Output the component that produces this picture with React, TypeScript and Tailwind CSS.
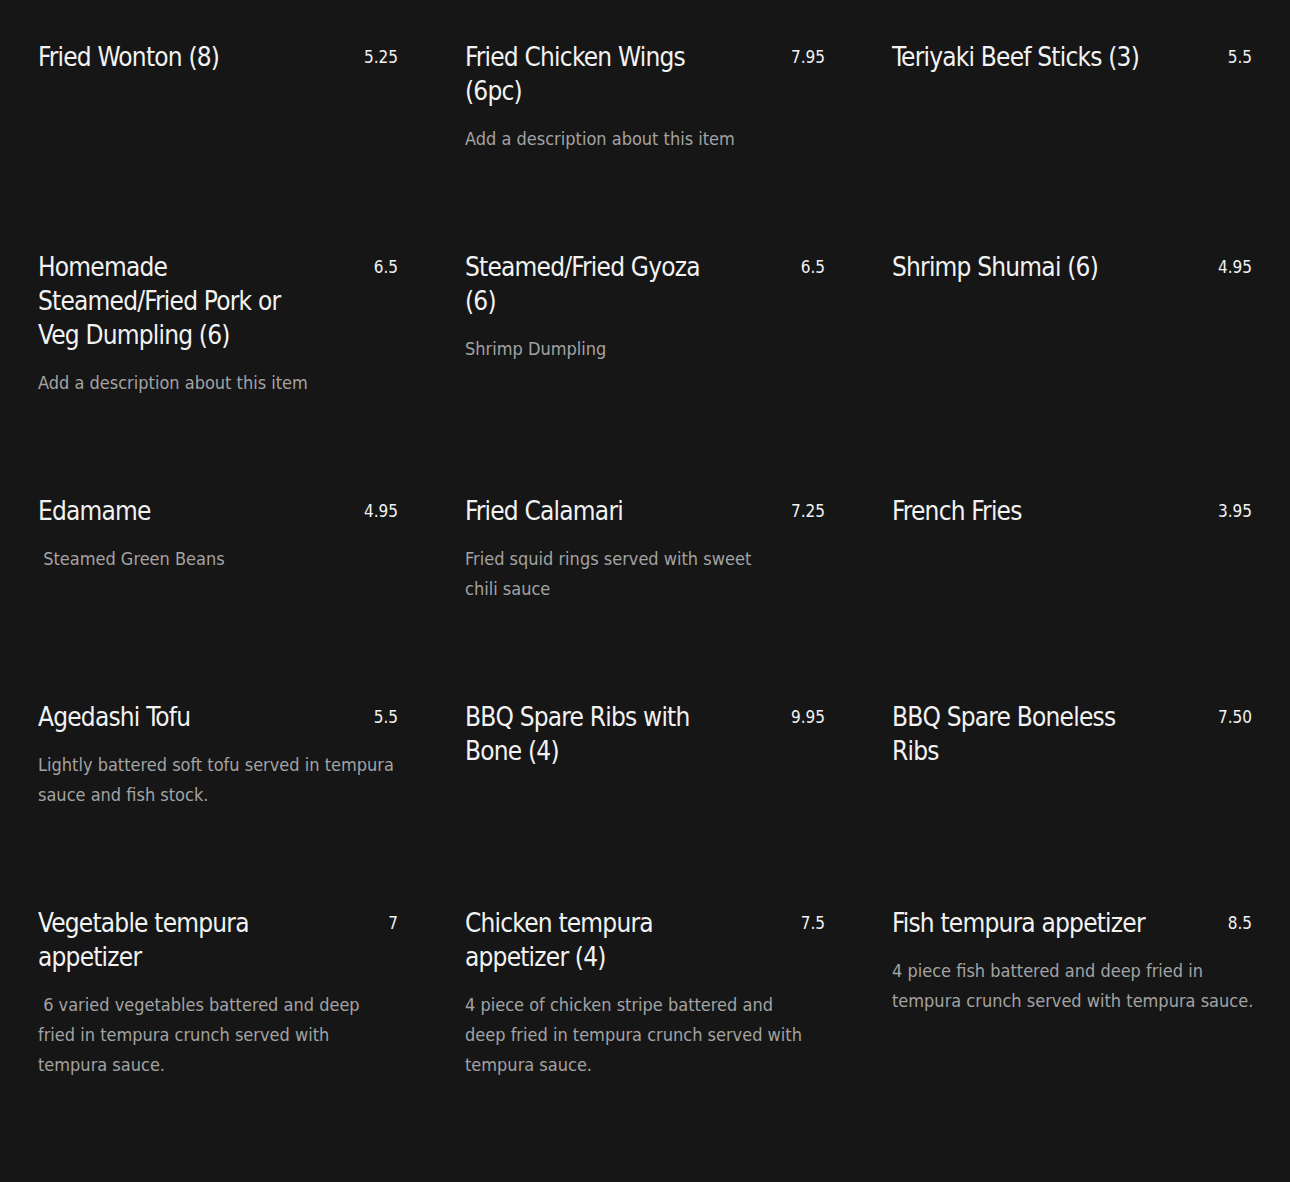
const items = [
  { name: 'Fried Wonton (8)', price: '5.25', desc: '' },
  { name: 'Fried Chicken Wings (6pc)', price: '7.95', desc: 'Add a description about this item' },
  { name: 'Teriyaki Beef Sticks (3)', price: '5.5', desc: '' },
  { name: 'Homemade Steamed/Fried Pork or Veg Dumpling (6)', price: '6.5', desc: 'Add a description about this item' },
  { name: 'Steamed/Fried Gyoza (6)', price: '6.5', desc: 'Shrimp Dumpling' },
  { name: 'Shrimp Shumai (6)', price: '4.95', desc: '' },
  { name: 'Edamame', price: '4.95', desc: ' Steamed Green Beans' },
  { name: 'Fried Calamari', price: '7.25', desc: 'Fried squid rings served with sweet\nchili sauce' },
  { name: 'French Fries', price: '3.95', desc: '' },
  { name: 'Agedashi Tofu', price: '5.5', desc: 'Lightly battered soft tofu served in tempura\nsauce and fish stock.' },
  { name: 'BBQ Spare Ribs with Bone (4)', price: '9.95', desc: '' },
  { name: 'BBQ Spare Boneless Ribs', price: '7.50', desc: '' },
  {
    name: 'Vegetable tempura appetizer',
    price: '7',
    desc: ' 6 varied vegetables battered and deep\nfried in tempura crunch served with\ntempura sauce.',
  },
  {
    name: 'Chicken tempura appetizer (4)',
    price: '7.5',
    desc: '4 piece of chicken stripe battered and\ndeep fried in tempura crunch served with\ntempura sauce.',
  },
  {
    name: 'Fish tempura appetizer',
    price: '8.5',
    desc: '4 piece fish battered and deep fried in\ntempura crunch served with tempura sauce.',
  },
  { name: 'Chicken Teriyaki Skewers', price: '6.5', desc: '' },
]

export default function App() {
  return (
    <div
      className="min-h-screen bg-[#161616] px-[38px] pt-[40px] pb-24"
      style={{ fontFamily: '"DejaVu Sans Condensed", "DejaVu Sans", sans-serif' }}
    >
      <div className="grid grid-cols-3 gap-x-[67px] gap-y-[96px]">
        {items.map((item) => (
          <div key={item.name}>
            <div className="flex items-start justify-between">
              <h3 className="w-[262px] text-[26px] leading-[34px] tracking-[-0.8px] text-[#f2f2f2]">{item.name}</h3>
              <span className="pt-[8px] text-[17px] leading-[18px] text-[#f2f2f2]">{item.price}</span>
            </div>
            {item.desc && (
              <p className="mt-[16px] whitespace-pre text-[18px] leading-[30px] text-[#a3a3a3]">{item.desc}</p>
            )}
          </div>
        ))}
      </div>
    </div>
  )
}
